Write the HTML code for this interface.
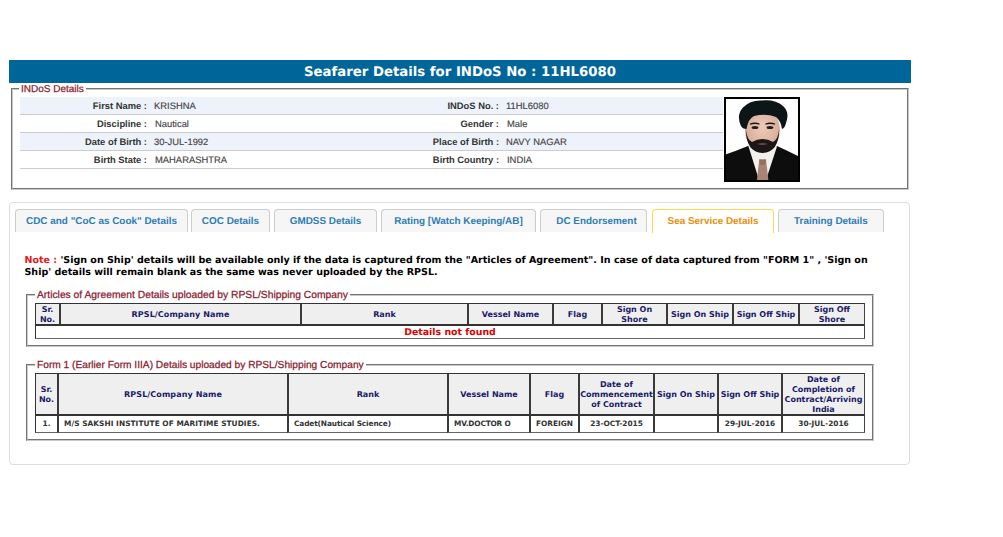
<!DOCTYPE html>
<html>
<head>
<meta charset="utf-8">
<title>Seafarer Details</title>
<style>
html,body{margin:0;padding:0;background:#fff;}
body{width:1003px;height:537px;position:relative;overflow:hidden;text-rendering:geometricPrecision;font-family:"Liberation Sans",Arial,sans-serif;font-size:11px;color:#333;}
.abs{position:absolute;box-sizing:border-box;}
.vb{font-family:"DejaVu Sans",Verdana,sans-serif;font-weight:bold;}
#title{left:9px;top:60px;width:902px;height:23px;background:#006699;color:#fff;font-size:13.27px;line-height:22px;text-align:center;}
#title span{position:absolute;left:295px;top:2px;white-space:nowrap;}
.fs{border:2px groove #c8c8c8;}
.legend{background:#fff;color:#8a1a2e;-webkit-text-stroke:0.25px #8a1a2e;font-size:10.2px;line-height:12px;white-space:nowrap;padding:0 2px;}
.row{left:20px;width:703px;height:18px;border-bottom:1px solid #ccc;}
.row.alt{background:#eef3fb;}
.lbl{position:absolute;top:0;line-height:17px;font-size:9.4px;font-weight:bold;color:#333;white-space:nowrap;text-align:right;}
.val{position:absolute;top:0;line-height:17px;font-size:9.4px;letter-spacing:0.01px;-webkit-text-stroke:0.15px #444;color:#444;white-space:nowrap;}
#panel{left:9px;top:202px;width:901px;height:263px;border:1px solid #ddd;border-radius:4px;background:#fff;}
.tab{top:209px;height:23px;border:1px solid #ccc;border-bottom:none;border-radius:4px 4px 0 0;background:#f6f6f6;color:#2e7db5;font-weight:bold;font-size:9.92px;line-height:24px;text-align:center;white-space:nowrap;}
.tab.act{background:#fff;border-color:#fbd850;color:#e78f08;height:24px;}
#note{left:24.5px;top:254.6px;width:870px;font-size:9.52px;line-height:12px;color:#000;}
#note b{color:#e61a22;}
table{border-collapse:separate;border-spacing:0;border:none;table-layout:fixed;position:absolute;box-sizing:border-box;}
th,td{padding:0;font-family:"DejaVu Sans",Verdana,sans-serif;font-weight:bold;overflow:visible;box-sizing:border-box;border-left:2px solid #3a3a3a;white-space:nowrap;}
th:first-child,td:first-child{border-left:1px solid #333;}
th:last-child,td:last-child{border-right:1px solid #444;}
th{background:#efefef;color:#1a1a66;font-size:8px;line-height:10px;text-align:center;border-top:1px solid #333;border-bottom:2px solid #333;}
th span{position:relative;top:1px;display:inline-block;}
td span{position:relative;top:-1px;display:inline-block;}
td{background:#fff;color:#333;font-size:7.4px;border-bottom:1px solid #666;}
</style>
</head>
<body>
<div id="title" class="abs vb"><span>Seafarer Details for INDoS No : 11HL6080</span></div>

<div class="abs fs" style="left:11px;top:88px;width:898px;height:102px;"></div>
<div class="abs legend" style="left:19px;top:84px;font-size:10px;">INDoS Details</div>

<div class="abs row alt" style="top:97px;"><span class="lbl" style="right:576px;">First Name :</span><span class="val" style="left:134px;">KRISHNA</span><span class="lbl" style="right:224px;">INDoS No. :</span><span class="val" style="left:486px;">11HL6080</span></div>
<div class="abs row" style="top:115px;"><span class="lbl" style="right:576px;">Discipline :</span><span class="val" style="left:135px;">Nautical</span><span class="lbl" style="right:224px;">Gender :</span><span class="val" style="left:487px;">Male</span></div>
<div class="abs row alt" style="top:133px;"><span class="lbl" style="right:576px;">Date of Birth :</span><span class="val" style="left:134px;">30-JUL-1992</span><span class="lbl" style="right:224px;">Place of Birth :</span><span class="val" style="left:486px;">NAVY NAGAR</span></div>
<div class="abs row" style="top:151px;"><span class="lbl" style="right:576px;">Birth State :</span><span class="val" style="left:135px;">MAHARASHTRA</span><span class="lbl" style="right:224px;">Birth Country :</span><span class="val" style="left:487px;">INDIA</span></div>

<div class="abs" id="photo" style="left:724px;top:97px;width:76px;height:85px;border:2px solid #000;background:#fff;overflow:hidden;">
<svg width="72" height="81" viewBox="0 0 72 81" style="display:block">
<defs>
<filter id="bl" x="-10%" y="-10%" width="120%" height="120%"><feGaussianBlur stdDeviation="0.7"/></filter>
<radialGradient id="sk" cx="50%" cy="45%" r="60%"><stop offset="0" stop-color="#eccbb9"/><stop offset="1" stop-color="#d2a892"/></radialGradient>
</defs>
<rect width="72" height="81" fill="#fefefe"/>
<g filter="url(#bl)">
<path d="M-2 83 L-2 56 Q10 52 22 47 L28 50 L36 60 L45 50 L51 47 Q62 52 74 58 L74 83 Z" fill="#0c0c0e"/>
<path d="M22.5 47.5 L27 45 L46 45 L51 47.5 L40 81 L33 81 Z" fill="#f3f1ee"/>
<path d="M33.2 60.5 L40 60.5 L42.5 82 L30.8 82 Z" fill="#a98474"/>
<path d="M33 60.5 L40.2 60.5 L38.8 66 L34.4 66 Z" fill="#96705f"/>
<ellipse cx="36.5" cy="31" rx="17.5" ry="21.5" fill="url(#sk)"/>
<path d="M19.8 30 Q20 53.5 36.5 54 Q53 53.5 53.2 30 Q52 41 47 43 Q42 40 36.5 40 Q31 40 26 43 Q21 41 19.8 30 Z" fill="#1a1512"/>
<path d="M31 45 Q36.5 43.4 42 45 Q36.5 46.6 31 45 Z" fill="#8a5a50"/>
<path d="M15 27 Q10 16 17 8.5 Q24 1 36 1.5 Q50 0.5 57 7 Q64 13 60 24 Q59 29 56 30 Q55 22 50 18 Q40 14 28 17 Q22 20 20.5 30 Q16.5 30 15 27 Z" fill="#0b1216"/>
<ellipse cx="29" cy="28.5" rx="3.4" ry="1.5" fill="#2a1d18"/>
<ellipse cx="44" cy="28.5" rx="3.4" ry="1.5" fill="#2a1d18"/>
<path d="M24 24.6 Q29 22.6 33.5 24.6 L33.5 25.8 Q29 24.2 24 25.8 Z" fill="#1c1411"/>
<path d="M39.5 24.6 Q44 22.6 49 24.6 L49 25.8 Q44 24.2 39.5 25.8 Z" fill="#1c1411"/>
</g>
</svg>
</div>

<div class="abs" id="panel"></div>
<div class="abs tab" style="left:15px;width:173px;">CDC and "CoC as Cook" Details</div>
<div class="abs tab" style="left:191px;width:79px;">COC Details</div>
<div class="abs tab" style="left:274px;width:103px;">GMDSS Details</div>
<div class="abs tab" style="left:381px;width:155px;">Rating [Watch Keeping/AB]</div>
<div class="abs tab" style="left:540px;width:107px;padding-left:6px;">DC Endorsement</div>
<div class="abs tab act" style="left:652px;width:122px;">Sea Service Details</div>
<div class="abs tab" style="left:778px;width:106px;">Training Details</div>

<div class="abs vb" id="note"><b>Note :</b> 'Sign on Ship' details will be available only if the data is captured from the "Articles of Agreement". In case of data captured from "FORM 1" , 'Sign on Ship' details will remain blank as the same was never uploaded by the RPSL.</div>

<div class="abs fs" style="left:26px;top:294px;width:848px;height:53px;"></div>
<div class="abs legend" style="left:35px;top:290px;font-size:10.3px;">Articles of Agreement Details uploaded by RPSL/Shipping Company</div>
<table style="left:35px;top:303px;width:830px;">
<colgroup><col style="width:24px"><col style="width:241px"><col style="width:167px"><col style="width:85px"><col style="width:49px"><col style="width:65px"><col style="width:66px"><col style="width:66px"><col style="width:67px"></colgroup>
<tr style="height:23px;"><th><span>Sr.<br>No.</span></th><th><span style="letter-spacing:0.1px">RPSL/Company Name</span></th><th><span>Rank</span></th><th><span>Vessel Name</span></th><th><span>Flag</span></th><th><span>Sign On<br>Shore</span></th><th><span>Sign On Ship</span></th><th><span>Sign Off Ship</span></th><th><span>Sign Off<br>Shore</span></th></tr>
<tr style="height:13px;"><td colspan="9" style="text-align:center;color:#e00000;font-size:9.4px;line-height:12px;"><span style="top:1px">Details not found</span></td></tr>
</table>

<div class="abs fs" style="left:26px;top:364px;width:848px;height:77px;"></div>
<div class="abs legend" style="left:35px;top:360px;">Form 1 (Earlier Form IIIA) Details uploaded by RPSL/Shipping Company</div>
<table style="left:35px;top:373px;width:830px;">
<colgroup><col style="width:22px"><col style="width:230px"><col style="width:160px"><col style="width:82px"><col style="width:49px"><col style="width:75px"><col style="width:64px"><col style="width:64px"><col style="width:84px"></colgroup>
<tr style="height:43px;"><th><span>Sr.<br>No.</span></th><th><span style="letter-spacing:0.1px">RPSL/Company Name</span></th><th><span>Rank</span></th><th><span>Vessel Name</span></th><th><span>Flag</span></th><th><span>Date of<br>Commencement<br>of Contract</span></th><th><span>Sign On Ship</span></th><th><span>Sign Off Ship</span></th><th><span>Date of<br>Completion of<br>Contract/Arriving<br>India</span></th></tr>
<tr style="height:17px;"><td style="text-align:center;"><span>1.</span></td><td style="padding-left:5px;letter-spacing:0.05px;"><span>M/S SAKSHI INSTITUTE OF MARITIME STUDIES.</span></td><td style="padding-left:5px;letter-spacing:-0.13px;"><span>Cadet(Nautical Science)</span></td><td style="padding-left:5px;letter-spacing:-0.19px;"><span>MV.DOCTOR O</span></td><td style="text-align:center;"><span>FOREIGN</span></td><td style="text-align:center;"><span>23-OCT-2015</span></td><td></td><td style="text-align:center;"><span>29-JUL-2016</span></td><td style="text-align:center;"><span>30-JUL-2016</span></td></tr>
</table>
</body>
</html>
